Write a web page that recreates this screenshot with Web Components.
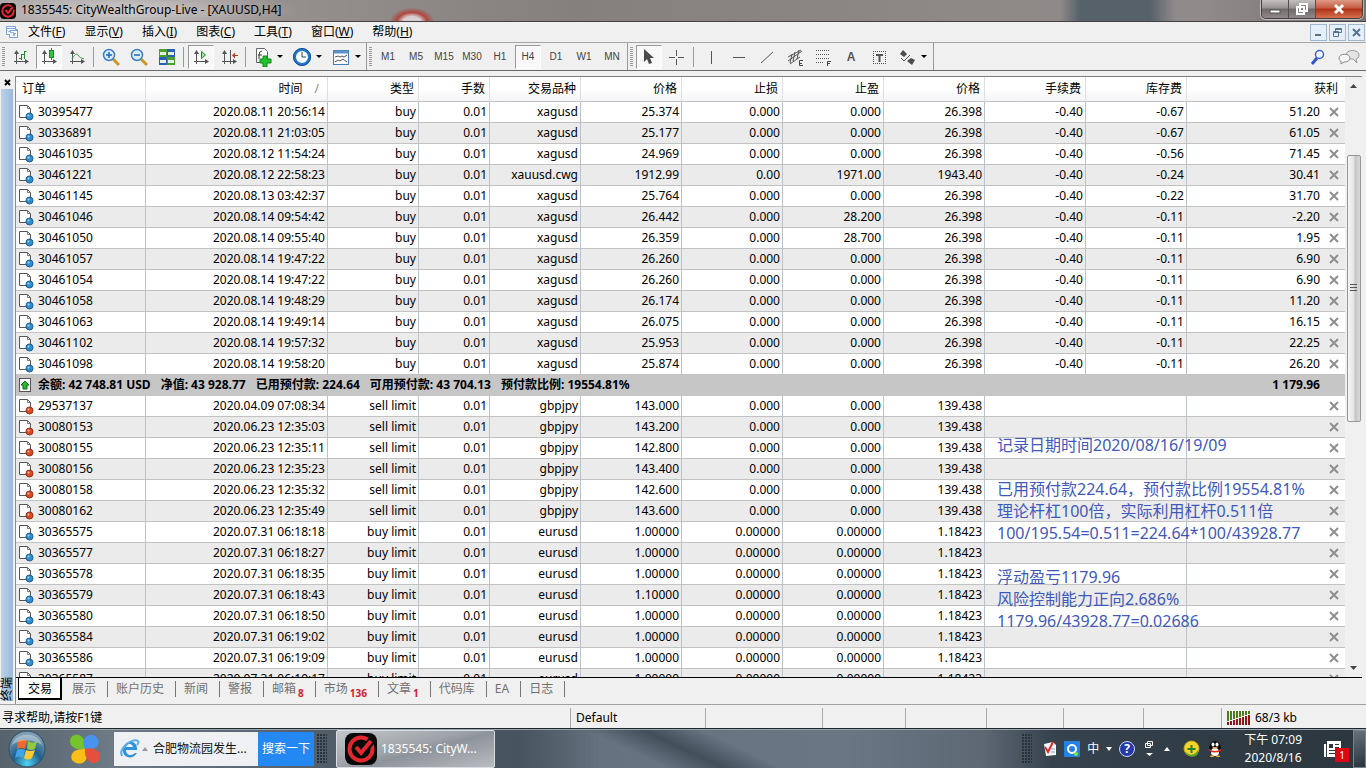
<!DOCTYPE html>
<html lang="zh-CN">
<head>
    <meta charset="UTF-8">
    <title>1835545: CityWealthGroup-Live - [XAUUSD,H4]</title>
    <style>
        :root {
            --ui-bg: #f0f0f0;
            --line: #a0a0a0;
            --row-line: #c2c2c2;
            --row-alt: #ebebeb;
            --muted: #707070;
            --note: #4159bd;
        }
        body {
            margin: 0;
            height: 100vh;
            display: flex;
            flex-direction: column;
            overflow: hidden;
            background: var(--ui-bg);
            color: #000;
            font-family: "Noto Sans", "Noto Sans CJK SC", sans-serif;
            font-size: 12px;
            line-height: 20px;
        }
    </style>
</head>
<body>
    <title-bar>1835545: CityWealthGroup-Live - [XAUUSD,H4]</title-bar>
    <menu-bar></menu-bar>
    <tool-bar></tool-bar>
    <terminal-panel>
        <order-table></order-table>
        <terminal-note slot="note">
            <p>记录日期时间2020/08/16/19/09</p>
            <p>&nbsp;</p>
            <p>已用预付款224.64，预付款比例19554.81%</p>
            <p>理论杆杠100倍，实际利用杠杆0.511倍</p>
            <p>100/195.54=0.511=224.64*100/43928.77</p>
            <p>&nbsp;</p>
            <p>浮动盈亏1179.96</p>
            <p>风险控制能力正向2.686%</p>
            <p>1179.96/43928.77=0.02686</p>
        </terminal-note>
        <tab-strip slot="tabs"></tab-strip>
    </terminal-panel>
    <status-bar>寻求帮助,请按F1键</status-bar>
    <task-bar></task-bar>

    <script>
        // Icons, each with its own view box size: [width, height, markup]
        const AXES = '<path d="M4.500 3v13M2 13.500h14" stroke="#555" fill="none"/><path d="M2 6l2.500-4L7 6zM13 11l4 2.500-4 2.500z" fill="#555"/>';
        const ICONS = {
            logo: [32, 32, '<rect width="32" height="32" rx="8" fill="#080808"/><circle cx="16" cy="16" r="11.500" fill="none" stroke="#e3262f" stroke-width="4"/><path d="M17 19L28 6" fill="none" stroke="#080808" stroke-width="8"/><path d="M11 14l5 6L26 8" fill="none" stroke="#e3262f" stroke-width="4"/>'],
            chartFile: [14, 14, '<path d="M1.500 1.500h9v3h2v8h-8v-3h-3z" fill="#fff" stroke="#7ba3d4"/><path d="M1.500 3.500h9M4.500 5.500h8M3 7l2-1 1 2 2-1 1 4 1-3 1 1" fill="none" stroke="#7ba3d4"/>'],
            bars: [18, 18, AXES + '<path d="M9.500 6v6M12.500 3v8M7 10.500h2.500M9.500 6.500h3M12.500 3.500h2" stroke="#238a35" fill="none"/>'],
            candles: [18, 18, AXES + '<path d="M11.500 0v12" stroke="#188a27"/><rect x="9.500" y="2.500" width="4" height="7" fill="#2fc644" stroke="#188a27"/>'],
            lineChart: [18, 18, AXES + '<path d="M4 11c3-5 5-6 6-4s3 3 6 4" stroke="#3b9c4a" fill="none"/>'],
            zoomIn: [18, 18, '<path d="M11 11l6 6" stroke="#c99a1f" stroke-width="3"/><circle cx="7" cy="7" r="5.500" fill="#d9edfb" stroke="#3f80c4" stroke-width="1.500"/><path d="M4 7h6M7 4v6" stroke="#2268b4" stroke-width="1.500"/>'],
            zoomOut: [18, 18, '<path d="M11 11l6 6" stroke="#c99a1f" stroke-width="3"/><circle cx="7" cy="7" r="5.500" fill="#d9edfb" stroke="#3f80c4" stroke-width="1.500"/><path d="M4 7h6" stroke="#2268b4" stroke-width="1.500"/>'],
            tile: [18, 18, '<path d="M1 1h8v8H1zM9 9h8v8H9z" fill="#49a12b"/><path d="M9 1h8v8H9zM1 9h8v8H1z" fill="#2a60b5"/><path d="M2 4h6v3H2zM10 4h6v3h-6zM2 12h6v3H2zM10 12h6v3h-6z" fill="#e6f0e0"/>'],
            autoScroll: [18, 18, AXES + '<path d="M9.500 3.500v7l4-3.500z" fill="#9be49f" stroke="#1c8f2d"/>'],
            shift: [18, 18, AXES + '<path d="M10.500 2v14" stroke="#555"/><path d="M18 7.500h-4" stroke="#b03a22"/><path d="M12 7.500l3-3v6z" fill="#b03a22"/>'],
            addIndicator: [20, 20, '<path d="M3.500 1.500h8l3 3v11h-11z" fill="#fff" stroke="#666"/><path d="M9 4q-3 0-3 4v4M5 8h4" stroke="#333" fill="none"/><path d="M10 9h4v3h4v4h-4v4h-4v-4H7v-4h3z" fill="#21c22c" stroke="#0f8718"/>'],
            clock: [18, 18, '<circle cx="9" cy="9" r="7.500" fill="#f6fbff" stroke="#2378c9" stroke-width="3"/><circle cx="9" cy="9" r="8.500" fill="none" stroke="#124f96"/><path d="M9 4v5h4" stroke="#444" fill="none"/>'],
            template: [18, 18, '<rect x="1.500" y="2.500" width="15" height="14" fill="#fff" stroke="#467db5"/><path d="M2 4h14" stroke="#5d93ca" stroke-width="3"/><path d="M3 9l3-1 2 1 2-1 2 1 3-2M3 14l3-2 2 1 3-2 4 3" stroke="#555" fill="none"/>'],
            cursor: [18, 18, '<path d="M4 1v13l3-3 2 5 3-1-2-5h4z" fill="#4a4a4a"/>'],
            cross: [18, 18, '<path d="M8.500 2v6M8.500 11v6M1 9.500h6M10 9.500h6" stroke="#555"/>'],
            vline: [18, 18, '<path d="M9.500 3v13" stroke="#555"/>'],
            hline: [18, 18, '<path d="M3 9.500h12" stroke="#555"/>'],
            trend: [18, 18, '<path d="M3 15L15 4" stroke="#555"/>'],
            channel: [18, 18, '<path d="M2 13L16 3M2 9l13-7M4 16L14 9M6 6l-2 9M9 4l-2 9M13 2l-2 9" stroke="#555"/><path d="M17 12.500h-3.500v5H17M13 15.500h3" stroke="#444" fill="none"/>'],
            fibo: [18, 18, '<path d="M2 2.500h14M2 6.500h14M2 10.500h14M2 14.500h8" stroke="#555" stroke-dasharray="1 1"/><path d="M17 13.500h-3.500v5M13 15.500h3" stroke="#444" fill="none"/>'],
            label: [18, 18, '<path d="M3 3.500h13M3 15.500h13M3.500 3v13M15.500 3v13" stroke="#555" stroke-dasharray="1 1" fill="none"/><path d="M6 6h7v2h-2.500v6h-2V8H6z" fill="#555"/>'],
            arrows: [18, 18, '<path d="M2 6l3-4 4 4-3 3zM9 13l4-3 4 2-3 5z" fill="#4d4d4d"/><path d="M3 10l3 3 6-6" stroke="#555" fill="none"/>'],
            search: [16, 16, '<path d="M7 9l-5 6" stroke="#3255c4" stroke-width="3"/><circle cx="9.500" cy="5.500" r="4" fill="#f4f8ff" stroke="#3a62d0" stroke-width="1.500"/>'],
            chat: [22, 16, '<path d="M8 6c0-6 13-6 13 0 0 3-2 4-3 4l1 4-4-4C11 10 8 9 8 6z" fill="#e4e4e4" stroke="#999"/><path d="M1 9c0-5 11-5 11 0 0 3-3 4-6 4l-3 2v-3c-1 0-2-1-2-3z" fill="#f6f6f6" stroke="#888"/>'],
            buyDoc: [16, 17, '<path d="M.5 1.500h8l3 3v9H.5z" fill="#fff" stroke="#555"/><path d="M8.500 1.500v3h3" fill="none" stroke="#777"/><circle cx="10.500" cy="12.500" r="3.500" fill="#2d8fd0" stroke="#1a5e95"/><circle cx="9.500" cy="11.500" r="1" fill="#a6dcf8"/>'],
            sellDoc: [16, 17, '<path d="M.5 1.500h8l3 3v9H.5z" fill="#fff" stroke="#555"/><path d="M8.500 1.500v3h3" fill="none" stroke="#777"/><circle cx="10.500" cy="12.500" r="3.500" fill="#dd4a20" stroke="#97301a"/><circle cx="9.500" cy="11.500" r="1" fill="#ffc0a0"/>'],
            balance: [16, 17, '<rect x=".5" y="1.500" width="11" height="13" fill="#fff" stroke="#555"/><path d="M6 4l4 4H8v4H4V8H2z" fill="#2bb62f" stroke="#146b18"/>'],
            close: [10, 10, '<path d="M1 1l8 8M9 1L1 9" stroke="#8f8f8f" stroke-width="2"/>'],
            traffic: [24, 14, [0, 1, 2, 3, 4, 5, 6, 7].map(i =>
                `<path d="M${i * 3 + 1} 0v${10 - i}" stroke="#4e7d1e" stroke-width="2"/><path d="M${i * 3 + 1} ${11 - i}v${3 + i}" stroke="#8c1713" stroke-width="2"/>`).join('')],
            start: [38, 38, '<defs><radialGradient id="g" cx=".5" cy=".9" r=".8"><stop offset="0" stop-color="#4fd3f2"/><stop offset=".5" stop-color="#1f5f8d"/><stop offset="1" stop-color="#7c9db2"/></radialGradient></defs><circle cx="19" cy="19" r="18" fill="url(#g)" stroke="#324f62"/><path d="M10 11q5-3 9 0l-2 8q-4-2-8 0z" fill="#f0682d"/><path d="M20 11q5 3 9 0l-2 8q-4 2-8 0z" fill="#8fca3e"/><path d="M9 20q4-2 8 0l-2 8q-4-3-8 0z" fill="#3fa5e6"/><path d="M18 20q4 2 9 0l-3 8q-4 3-8 0z" fill="#fdc933"/><path d="M4 15C8 1 30 1 34 15 26 9 12 9 4 15z" fill="#fff" opacity=".35"/>'],
            pinwheel: [32, 32, '<path d="M16 16C10 18 2 15 1 9 1 3 5 1 10 2c5 2 7 8 6 14z" fill="#73c52b"/><path d="M16 16c-2-5-3-9 1-12 4-4 10-2 12 2 2 5-1 9-5 10-3 1-6 1-8 0z" fill="#4a93ec"/><path d="M16 16c2 5 3 10-1 13-4 3-10 1-12-2-2-5 1-9 5-10 3-1 6-1 8-1z" fill="#f9bf16"/><path d="M16 16c6-2 13 0 15 6 1 5-3 9-8 8-5-2-8-8-7-14z" fill="#e4503c"/>'],
            explorer: [20, 20, '<path d="M16 11H6c0 6 6 6 9 3h2C11 23 1 17 3 9 6 0 18 1 17 11z" fill="#2b92e0"/><path d="M6 8h7c-1-4-6-4-7 0z" fill="#fff"/><path d="M2 17C-2 10 13-2 18 2c1 1 0 3-1 4" fill="none" stroke="#58aeea" stroke-width="2"/>'],
            trayDoc: [14, 16, '<path d="M1 3l9-2 3 3v10l-10 1z" fill="#f4f7ff"/><path d="M2 6l3 5L10 1" fill="none" stroke="#df2a20" stroke-width="2"/><path d="M8 8h4M8 11h4" stroke="#8ca8cf"/>'],
            trayQ: [16, 16, '<rect width="16" height="16" rx="1" fill="#2582e5"/><circle cx="8" cy="8" r="4" fill="none" stroke="#fff" stroke-width="2"/><circle cx="12" cy="13" r="2" fill="#7bea3b"/>'],
            restore: [10, 18, '<path d="M3.500 1.500h5v4h-5zM1.500 3.500h5v4h-5z" stroke="#fff" fill="#34404a"/><path d="M2 13h7l-3.500 3z" fill="#fff"/>'],
            shield: [17, 17, '<circle cx="8.500" cy="8.500" r="7.500" fill="#f7d42a" stroke="#b6a621"/><path d="M2 11c4 5 10 5 13-1v4c-3 4-10 4-13-3z" fill="#55a62e"/><path d="M8.500 5v8M4.500 9h8" stroke="#27812a" stroke-width="2"/>'],
            penguin: [16, 18, '<ellipse cx="8" cy="8" rx="6" ry="7" fill="#0a0a0a"/><ellipse cx="8" cy="12" rx="4" ry="4" fill="#fff"/><ellipse cx="6" cy="4.500" rx="1.500" ry="2" fill="#fff"/><ellipse cx="10" cy="4.500" rx="1.500" ry="2" fill="#fff"/><path d="M5 7h6l-3 2z" fill="#f1ab16"/><path d="M2 9q6 4 12 0v2q-6 3-12 0z" fill="#e32b20"/><path d="M3 16q3-2 4 1H3zM13 16q-3-2-4 1h4z" fill="#f2a618"/>'],
            news: [20, 20, '<path d="M4 2h14v16H4zM1 5h2v13H1z" fill="#fff"/><path d="M6 5h4v4H6z" fill="#30383e"/><path d="M12 5.500h4M12 8.500h4M6 11.500h10M6 14.500h10" stroke="#30383e"/>']
        };

        class AppIcon extends HTMLElement {
            constructor() {
                super();
                this.attachShadow({mode: 'open'});
            }
            connectedCallback() {
                const [w, h, body] = ICONS[this.getAttribute('name')];
                const size = this.getAttribute('size');
                this.shadowRoot.innerHTML = `
                    <style>
                        :host { display: inline-flex; flex: none; }
                        svg { display: block; }
                    </style>
                    <svg width="${size || w}" height="${size || h}" viewBox="0 0 ${w} ${h}" aria-hidden="true">${body}</svg>
                `;
            }
        }

        class TitleBar extends HTMLElement {
            constructor() {
                super();
                this.attachShadow({mode: 'open'}).innerHTML = `
                    <style>
                        :host {
                            display: flex;
                            flex: none;
                            height: 21px;
                            border-bottom: 1px solid #474143;
                            justify-content: space-between;
                            background:
                                radial-gradient(ellipse 170px 22px at 130px 11px, rgba(255,255,255,.5), transparent),
                                radial-gradient(ellipse 25px 16px at 412px 22px, #d7cfd2 35%, #b0453c 60%, transparent 90%),
                                linear-gradient(90deg, transparent 1060px, #56616a 1080px, #56616a 1150px, transparent 1175px),
                                linear-gradient(90deg, #aaa4a4, #948e8d 22%, #857f7e 42%, #8e8887 70%, #918a8a 88%, #777172);
                        }
                        .name, .controls { display: flex; }
                        .name { gap: 5px; }
                        app-icon { margin-top: 3px; }
                        .controls {
                            height: 18px;
                            margin-right: 3px;
                            border: 1px solid #453e3f;
                            border-top: 0;
                            border-radius: 0 0 5px 5px;
                            overflow: hidden;
                            box-shadow: 0 0 0 1px rgba(255,255,255,.5);
                        }
                        button {
                            width: 27px;
                            padding: 0;
                            border: 0;
                            border-right: 1px solid #554e4f;
                            display: grid;
                            place-items: center;
                            background: linear-gradient(#c5c0c0, #999292 45%, #706969 50%, #918989);
                        }
                        .close {
                            width: 46px;
                            border: 0;
                            background: linear-gradient(#dd9a87, #c75a40 45%, #b03118 50%, #d5714f);
                        }
                    </style>
                    <div class="name"><app-icon name="logo" size="16"></app-icon><span><slot></slot></span></div>
                    <div class="controls">
                        <button aria-label="最小化"><svg width="14" height="14"><rect x="2" y="8" width="10" height="3" fill="#fff" stroke="#555"/></svg></button>
                        <button aria-label="还原"><svg width="14" height="14"><path d="M5 2h7v7H5zM2 5h7v7H2z" fill="#8c8585" stroke="#fff" stroke-width="2"/></svg></button>
                        <button class="close" aria-label="关闭"><svg width="14" height="14"><path d="M3 3l8 8M11 3l-8 8" stroke="#fff" stroke-width="3"/></svg></button>
                    </div>
                `;
            }
        }

        class MenuBar extends HTMLElement {
            constructor() {
                super();
                const menus = [['文件', 'F'], ['显示', 'V'], ['插入', 'I'], ['图表', 'C'], ['工具', 'T'], ['窗口', 'W'], ['帮助', 'H']];
                this.attachShadow({mode: 'open'}).innerHTML = `
                    <style>
                        :host {
                            display: flex;
                            flex: none;
                            height: 20px;
                            border-bottom: 1px solid #a6a6a6;
                            align-items: center;
                        }
                        app-icon { margin-left: 5px; }
                        nav { display: flex; flex: 1; gap: 1px; }
                        button { font: inherit; border: 0; background: none; }
                        nav button { padding: 0 9px; }
                        .child { display: flex; gap: 2px; margin-right: 1px; }
                        .child button {
                            width: 17px;
                            height: 17px;
                            padding: 0;
                            border: 1px solid #9fb9d2;
                            background: #e4eff9;
                            display: grid;
                            place-items: center;
                        }
                        path { fill: none; stroke: #58738c; stroke-width: 2; }
                        path.thin { stroke-width: 1; }
                    </style>
                    <app-icon name="chartFile"></app-icon>
                    <nav>${menus.map(([text, key]) => `<button>${text}(<u>${key}</u>)</button>`).join('')}</nav>
                    <div class="child">
                        <button aria-label="最小化图表"><svg width="11" height="11"><path d="M2 8h6"/></svg></button>
                        <button aria-label="还原图表"><svg width="11" height="11"><path class="thin" d="M3.500 4V1.500h6v4H7M3.500 2.500h6M1.500 4.500h5v5h-5zM1.500 5.500h5"/></svg></button>
                        <button aria-label="关闭图表"><svg width="11" height="11"><path d="M2 2l7 7M9 2L2 9"/></svg></button>
                    </div>
                `;
            }
        }

        class ToolButton extends HTMLElement {
            constructor() {
                super();
                this.attachShadow({mode: 'open'}).innerHTML = `
                    <style>
                        :host { display: flex; flex: none; }
                        button {
                            width: 26px;
                            height: 24px;
                            margin: 0 1px;
                            padding: 0;
                            border: 1px solid transparent;
                            display: grid;
                            place-items: center;
                            background: none;
                            color: #444;
                            font: 10px "Liberation Sans", sans-serif;
                        }
                        :host([pressed]) button {
                            border-color: #999 #fff #fff #999;
                            background: #f8f8f8;
                        }
                        i { display: none; width: 11px; align-items: center; }
                        :host([menu]) i { display: flex; }
                        i::after {
                            content: "";
                            border: 3px solid transparent;
                            border-top-color: #000;
                            border-bottom: 0;
                        }
                    </style>
                    <button><slot></slot></button><i></i>
                `;
            }
            connectedCallback() {
                this.shadowRoot.querySelector('button').setAttribute('aria-label', this.getAttribute('label') || this.textContent);
            }
        }

        class ToolBar extends HTMLElement {
            constructor() {
                super();
                const tool = (name, attrs = '') => `<tool-button label="${name}" ${attrs}><app-icon name="${name}"></app-icon></tool-button>`;
                const periods = ['M1', 'M5', 'M15', 'M30', 'H1', 'H4', 'D1', 'W1', 'MN'];
                this.attachShadow({mode: 'open'}).innerHTML = `
                    <style>
                        :host {
                            display: flex;
                            flex: none;
                            height: 27px;
                            border-bottom: 1px solid #6c6c6c;
                        }
                        .band {
                            display: flex;
                            align-items: center;
                            border-right: 1px solid #999;
                        }
                        .band + .band { padding-right: 1px; }
                        .band::before {
                            content: "";
                            width: 3px;
                            height: 19px;
                            margin: 0 2px;
                            background: repeating-linear-gradient(#999 0 1px, transparent 1px 2px);
                        }
                        hr {
                            width: 1px;
                            height: 20px;
                            margin: 0 3px 0 2px;
                            border: 0;
                            background: #999;
                        }
                        .right { display: flex; align-items: center; gap: 12px; margin-left: auto; padding-right: 6px; }
                        .right button { border: 0; padding: 0; background: none; display: flex; }
                        b { font-size: 12px; color: #555; }
                    </style>
                    <div class="band">
                        ${tool('bars')}${tool('candles', 'pressed')}${tool('lineChart')}<hr>
                        ${tool('zoomIn')}${tool('zoomOut')}${tool('tile')}<hr>
                        ${tool('autoScroll', 'pressed')}${tool('shift')}<hr>
                        ${tool('addIndicator', 'menu')}${tool('clock', 'menu')}${tool('template', 'menu')}
                    </div>
                    <div class="band">
                        ${periods.map(p => `<tool-button ${p === 'H4' ? 'pressed' : ''}>${p}</tool-button>`).join('')}
                    </div>
                    <div class="band">
                        ${tool('cursor', 'pressed')}${tool('cross')}<hr>
                        ${tool('vline')}${tool('hline')}${tool('trend')}${tool('channel')}${tool('fibo')}
                        <tool-button><b>A</b></tool-button>
                        ${tool('label')}${tool('arrows', 'menu')}
                    </div>
                    <div class="right">
                        <button aria-label="搜索"><app-icon name="search"></app-icon></button>
                        <button aria-label="消息"><app-icon name="chat"></app-icon></button>
                    </div>
                `;
            }
        }

        // Left caption strip, the list with its scroll bar, and the tabs under it
        class TerminalPanel extends HTMLElement {
            constructor() {
                super();
                this.attachShadow({mode: 'open'}).innerHTML = `
                    <style>
                        :host {
                            display: grid;
                            flex: 1;
                            min-height: 0;
                            grid-template: minmax(0, 1fr) 27px / 16px 1fr;
                            padding-top: 5px;
                        }
                        .caption {
                            grid-row: 1 / 3;
                            display: flex;
                            flex-direction: column;
                            padding: 0 2px 3px 1px;
                            border-right: 1px solid #8c8c8c;
                        }
                        .caption button {
                            height: 13px;
                            padding: 0;
                            border: 0;
                            background: none;
                            display: grid;
                            place-items: center;
                        }
                        .caption div {
                            flex: 1;
                            width: 12px;
                            background: linear-gradient(90deg, #9db9d8, #b9d3ee);
                            writing-mode: vertical-rl;
                            text-orientation: sideways;
                            transform: rotate(180deg);
                            line-height: 12px;
                        }
                        .view {
                            position: relative;
                            display: flex;
                            min-width: 0;
                            margin-right: 4px;
                            border-top: 1px solid #808080;
                            overflow: hidden;
                        }
                        ::slotted(order-table) { flex: 1; min-width: 0; }
                        .scroll {
                            width: 17px;
                            flex: none;
                            display: flex;
                            flex-direction: column;
                        }
                        .scroll button {
                            border: 0;
                            padding: 0;
                            height: 18px;
                            background: none;
                            display: grid;
                            place-items: center;
                        }
                        .scroll .before { flex: 60; }
                        .scroll .after { flex: 238; }
                        .thumb {
                            flex: 266;
                            margin: 0 1px 0 2px;
                            border: 1px solid #979797;
                            border-radius: 2px;
                            display: grid;
                            place-items: center;
                            background: linear-gradient(90deg, #f5f5f5, #e6e6e8 45%, #c6c6ca 60%, #d8d8dc);
                        }
                    </style>
                    <div class="caption">
                        <button aria-label="关闭"><svg width="7" height="7"><path d="M1 1l5 5M6 1L1 6" stroke="#000" stroke-width="2"/></svg></button>
                        <div>终端</div>
                    </div>
                    <div class="view">
                        <slot></slot>
                        <div class="scroll">
                            <button aria-label="向上"><svg width="7" height="4"><path d="M0 4L3.500 0 7 4z" fill="#444"/></svg></button>
                            <span class="before"></span>
                            <div class="thumb"><svg width="8" height="8"><path d="M0 .5h7M0 3.500h7M0 6.500h7" stroke="#555"/></svg></div>
                            <span class="after"></span>
                            <button aria-label="向下"><svg width="7" height="4"><path d="M0 0h7L3.500 4z" fill="#444"/></svg></button>
                        </div>
                        <slot name="note"></slot>
                    </div>
                    <slot name="tabs"></slot>
                `;
            }
        }

        // Text laid over the list
        class TerminalNote extends HTMLElement {
            constructor() {
                super();
                this.attachShadow({mode: 'open'}).innerHTML = `
                    <style>
                        :host {
                            position: absolute;
                            top: 357px;
                            right: 39px;
                            width: 326px;
                            color: var(--note);
                            font-size: 16px;
                            line-height: 22px;
                            white-space: nowrap;
                        }
                        ::slotted(p) { margin: 0; }
                    </style>
                    <slot></slot>
                `;
            }
        }

        // [order, time, type, symbol, open price, s/l, t/p, price, swap, profit]
        const OPEN = [
            ['30395477', '2020.08.11 20:56:14', 'buy', 'xagusd', '25.374', '0.000', '0.000', '26.398', '-0.67', '51.20'],
            ['30336891', '2020.08.11 21:03:05', 'buy', 'xagusd', '25.177', '0.000', '0.000', '26.398', '-0.67', '61.05'],
            ['30461035', '2020.08.12 11:54:24', 'buy', 'xagusd', '24.969', '0.000', '0.000', '26.398', '-0.56', '71.45'],
            ['30461221', '2020.08.12 22:58:23', 'buy', 'xauusd.cwg', '1912.99', '0.00', '1971.00', '1943.40', '-0.24', '30.41'],
            ['30461145', '2020.08.13 03:42:37', 'buy', 'xagusd', '25.764', '0.000', '0.000', '26.398', '-0.22', '31.70'],
            ['30461046', '2020.08.14 09:54:42', 'buy', 'xagusd', '26.442', '0.000', '28.200', '26.398', '-0.11', '-2.20'],
            ['30461050', '2020.08.14 09:55:40', 'buy', 'xagusd', '26.359', '0.000', '28.700', '26.398', '-0.11', '1.95'],
            ['30461057', '2020.08.14 19:47:22', 'buy', 'xagusd', '26.260', '0.000', '0.000', '26.398', '-0.11', '6.90'],
            ['30461054', '2020.08.14 19:47:22', 'buy', 'xagusd', '26.260', '0.000', '0.000', '26.398', '-0.11', '6.90'],
            ['30461058', '2020.08.14 19:48:29', 'buy', 'xagusd', '26.174', '0.000', '0.000', '26.398', '-0.11', '11.20'],
            ['30461063', '2020.08.14 19:49:14', 'buy', 'xagusd', '26.075', '0.000', '0.000', '26.398', '-0.11', '16.15'],
            ['30461102', '2020.08.14 19:57:32', 'buy', 'xagusd', '25.953', '0.000', '0.000', '26.398', '-0.11', '22.25'],
            ['30461098', '2020.08.14 19:58:20', 'buy', 'xagusd', '25.874', '0.000', '0.000', '26.398', '-0.11', '26.20']
        ];
        const PENDING = [
            ['29537137', '2020.04.09 07:08:34', 'sell limit', 'gbpjpy', '143.000', '0.000', '0.000', '139.438'],
            ['30080153', '2020.06.23 12:35:03', 'sell limit', 'gbpjpy', '143.200', '0.000', '0.000', '139.438'],
            ['30080155', '2020.06.23 12:35:11', 'sell limit', 'gbpjpy', '142.800', '0.000', '0.000', '139.438'],
            ['30080156', '2020.06.23 12:35:23', 'sell limit', 'gbpjpy', '143.400', '0.000', '0.000', '139.438'],
            ['30080158', '2020.06.23 12:35:32', 'sell limit', 'gbpjpy', '142.600', '0.000', '0.000', '139.438'],
            ['30080162', '2020.06.23 12:35:49', 'sell limit', 'gbpjpy', '143.600', '0.000', '0.000', '139.438'],
            ['30365575', '2020.07.31 06:18:18', 'buy limit', 'eurusd', '1.00000', '0.00000', '0.00000', '1.18423'],
            ['30365577', '2020.07.31 06:18:27', 'buy limit', 'eurusd', '1.00000', '0.00000', '0.00000', '1.18423'],
            ['30365578', '2020.07.31 06:18:35', 'buy limit', 'eurusd', '1.00000', '0.00000', '0.00000', '1.18423'],
            ['30365579', '2020.07.31 06:18:43', 'buy limit', 'eurusd', '1.10000', '0.00000', '0.00000', '1.18423'],
            ['30365580', '2020.07.31 06:18:50', 'buy limit', 'eurusd', '1.00000', '0.00000', '0.00000', '1.18423'],
            ['30365584', '2020.07.31 06:19:02', 'buy limit', 'eurusd', '1.00000', '0.00000', '0.00000', '1.18423'],
            ['30365586', '2020.07.31 06:19:09', 'buy limit', 'eurusd', '1.00000', '0.00000', '0.00000', '1.18423'],
            ['30365587', '2020.07.31 06:19:17', 'buy limit', 'eurusd', '1.00000', '0.00000', '0.00000', '1.18423']
        ];

        class OrderTable extends HTMLElement {
            constructor() {
                super();
                const heads = ['订单', '时间', '类型', '手数', '交易品种', '价格', '止损', '止盈', '价格', '手续费', '库存费', '获利'];
                const widths = [130, 182, 91, 71, 91, 101, 101, 101, 101, 101, 101];
                const close = '<button aria-label="平仓"><app-icon name="close"></app-icon></button>';
                const row = ([id, time, type, symbol, open, sl, tp, price, swap, profit]) => `
                    <tr>
                        <td><app-icon name="${type.startsWith('sell') ? 'sellDoc' : 'buyDoc'}"></app-icon>${id}</td>
                        <td>${time}</td><td>${type}</td><td>0.01</td><td>${symbol}</td>
                        <td>${open}</td><td>${sl}</td><td>${tp}</td><td>${price}</td>
                        ${profit ? `<td>-0.40</td><td>${swap}</td>` : '<td colspan="2"></td>'}
                        <td>${profit || ''}${close}</td>
                    </tr>`;
                this.attachShadow({mode: 'open'}).innerHTML = `
                    <style>
                        :host { display: block; }
                        table {
                            width: 100%;
                            table-layout: fixed;
                            border-spacing: 0;
                            background: #fff;
                            white-space: nowrap;
                        }
                        th, td {
                            box-sizing: border-box;
                            height: 21px;
                            padding: 0 2px 0 0;
                            border-right: 1px solid #b9c3cc;
                            border-bottom: 1px solid var(--row-line);
                            text-align: right;
                        }
                        th {
                            height: 25px;
                            padding-right: 4px;
                            border-right-color: #dedfe1;
                            background: linear-gradient(#fff 50%, #f3f4f6);
                            font-weight: normal;
                        }
                        th:first-child { padding-left: 6px; text-align: left; }
                        th:last-child { padding-right: 7px; }
                        th span { margin: 0 4px 0 12px; color: #888; }
                        td:first-child { padding-left: 3px; text-align: left; }
                        th:last-child, td:last-child { border-right: 0; }
                        td:last-child { padding-right: 6px; }
                        td:first-child app-icon { margin-right: 3px; vertical-align: top; margin-top: 2px; }
                        tbody tr:nth-child(even) { background: var(--row-alt); }
                        button {
                            padding: 0;
                            margin-left: 9px;
                            border: 0;
                            background: none;
                            vertical-align: middle;
                            line-height: 10px;
                        }
                        tbody tr.balance {
                            background: #c6c6c6;
                            font-weight: bold;
                        }
                        .balance td { border-color: #c6c6c6; }
                        .balance span { margin-right: 10px; }
                        .balance td:last-child { padding-right: 25px; }
                    </style>
                    <table>
                        <colgroup>${widths.map(w => `<col style="width: ${w}px">`).join('')}<col></colgroup>
                        <thead><tr>${heads.map((h, i) => `<th>${h}${i === 1 ? '<span>/</span>' : ''}</th>`).join('')}</tr></thead>
                        <tbody>
                            ${OPEN.map(row).join('')}
                            <tr class="balance">
                                <td colspan="11"><app-icon name="balance"></app-icon><span>余额: 42 748.81 USD</span><span>净值: 43 928.77</span><span>已用预付款: 224.64</span><span>可用预付款: 43 704.13</span><span>预付款比例: 19554.81%</span></td>
                                <td>1 179.96</td>
                            </tr>
                            ${PENDING.map(row).join('')}
                        </tbody>
                    </table>
                `;
            }
        }

        class TabStrip extends HTMLElement {
            constructor() {
                super();
                const tabs = [['交易'], ['展示'], ['账户历史'], ['新闻'], ['警报'], ['邮箱', 8], ['市场', 136], ['文章', 1], ['代码库'], ['EA'], ['日志']];
                this.attachShadow({mode: 'open'}).innerHTML = `
                    <style>
                        :host {
                            display: flex;
                            margin-right: 4px;
                            border-top: 1px solid #000;
                            align-items: flex-start;
                        }
                        button {
                            height: 16px;
                            margin-top: 3px;
                            padding: 0 11px 0 8px;
                            border: 0;
                            border-right: 1px solid #777;
                            background: none;
                            color: var(--muted);
                            font: inherit;
                            line-height: 16px;
                            display: flex;
                        }
                        .active {
                            height: 22px;
                            margin: 0 2px;
                            padding: 2px 8px 0 9px;
                            border: 1px solid #000;
                            border-width: 0 2px 2px 1px;
                            background: #fff;
                            color: #000;
                            line-height: 18px;
                        }
                        small {
                            margin: 5px 0 0 2px;
                            color: #d3222c;
                            font: bold 10px/14px "Noto Sans", sans-serif;
                        }
                    </style>
                    ${tabs.map(([name, count], i) => `<button class="${i ? '' : 'active'}">${name}${count ? `<small>${count}</small>` : ''}</button>`).join('')}
                `;
            }
        }

        class StatusBar extends HTMLElement {
            constructor() {
                super();
                this.attachShadow({mode: 'open'}).innerHTML = `
                    <style>
                        :host {
                            display: grid;
                            flex: none;
                            grid-template-columns: 1fr 135px 117px 83px 81px 77px 80px 78px 145px;
                            height: 23px;
                            border-top: 1px solid var(--line);
                        }
                        div { margin: 3px 0 2px; border-left: 1px solid #aaa; padding-left: 5px; line-height: 20px; }
                        div:first-of-type { border: 0; padding-left: 2px; }
                        .kb { display: flex; gap: 4px; }
                        app-icon { margin-top: 3px; }
                    </style>
                    <div><slot></slot></div>
                    <div>Default</div>
                    <div></div><div></div><div></div><div></div><div></div><div></div>
                    <div class="kb"><app-icon name="traffic"></app-icon>68/3 kb</div>
                `;
            }
        }

        class TaskBar extends HTMLElement {
            constructor() {
                super();
                this.attachShadow({mode: 'open'}).innerHTML = `
                    <style>
                        :host {
                            display: flex;
                            flex: none;
                            box-sizing: border-box;
                            height: 40px;
                            border-top: 1px solid #20282f;
                            box-shadow: inset 0 1px #9ba5ae;
                            align-items: center;
                            color: #fff;
                            background:
                                linear-gradient(25deg, transparent 46%, rgba(30,42,52,.5) 50%, transparent 54%),
                                linear-gradient(90deg, #56636d, #6d7984 8%, #515d69 24%, #46545f 38%, #66727f 44%, #6a7684 62%, #5d6874 72%, #36424c 77%, #2b363e 100%);
                        }
                        button { border: 0; padding: 0; background: none; color: inherit; font: inherit; display: flex; align-items: center; }
                        .start { margin: 0 23px 0 8px; }
                        form { display: flex; height: 34px; margin-left: 13px; background: #eef0f3; align-items: center; }
                        form app-icon { margin-left: 6px; }
                        input {
                            width: 110px;
                            padding: 0 0 0 5px;
                            border: 0;
                            background: none;
                            box-sizing: border-box;
                            font: inherit;
                            color: #111;
                        }
                        .up::before {
                            content: "";
                            display: block;
                            border: 3px solid transparent;
                            border-bottom: 4px solid currentColor;
                            border-top: 0;
                        }
                        form .up { margin-left: 2px; color: #999; }
                        form button { width: 56px; height: 34px; justify-content: center; background: #2488f3; }
                        .grip {
                            width: 10px;
                            height: 30px;
                            margin: 0 9px 0 3px;
                            background: radial-gradient(circle at 1px 1px, #29333b 1px, transparent 1px) 0 0 / 3px 3px;
                        }
                        .task {
                            box-sizing: border-box;
                            width: 159px;
                            height: 38px;
                            padding: 0 8px;
                            gap: 4px;
                            border: 1px solid #d8dde2;
                            border-radius: 2px;
                            background: linear-gradient(165deg, #c3c7ca, #9da2a8 45%, #8d939a 55%, #b9bdc2);
                        }
                        .tray { display: flex; align-items: center; margin-left: auto; gap: 7px; }
                        .tray .grip { margin: 0 4px 0 0; }
                        .tray .up { margin: 0 6px 0 3px; }
                        .help {
                            width: 16px;
                            height: 16px;
                            margin-right: 2px;
                            justify-content: center;
                            border: 1px solid #c7d2ff;
                            border-radius: 50%;
                            background: #2639a8;
                            font-weight: bold;
                        }
                        .down::before {
                            content: "";
                            border: 3px solid transparent;
                            border-top: 4px solid #fff;
                            border-bottom: 0;
                        }
                        time { padding: 0 14px; text-align: center; line-height: 18px; }
                        .news { position: relative; margin-right: 3px; }
                        .news span {
                            position: absolute;
                            left: 12px;
                            top: 9px;
                            width: 14px;
                            height: 14px;
                            background: #dd0612;
                            font: 10px/14px "Noto Sans", sans-serif;
                        }
                        .desktop { width: 13px; height: 38px; border: 1px solid #77828b; background: linear-gradient(160deg, #66727b, #29343c); }
                    </style>
                    <button class="start" aria-label="开始"><app-icon name="start"></app-icon></button>
                    <button aria-label="浏览器"><app-icon name="pinwheel"></app-icon></button>
                    <form>
                        <app-icon name="explorer"></app-icon>
                        <span class="up"></span>
                        <input type="text" aria-label="搜索" value="合肥物流园发生...">
                        <button type="button">搜索一下</button>
                    </form>
                    <div class="grip"></div>
                    <button class="task"><app-icon name="logo"></app-icon>1835545: CityW...</button>
                    <div class="tray">
                        <div class="grip"></div>
                        <app-icon name="trayDoc"></app-icon>
                        <app-icon name="trayQ"></app-icon>
                        <span>中</span>
                        <button class="down" aria-label="输入法"></button>
                        <button class="help" aria-label="帮助">?</button>
                        <app-icon name="restore"></app-icon>
                        <button class="up" aria-label="显示隐藏的图标"></button>
                        <app-icon name="shield"></app-icon>
                        <app-icon name="penguin"></app-icon>
                        <time>下午 07:09<br>2020/8/16</time>
                        <button class="news" aria-label="通知"><app-icon name="news"></app-icon><span>1</span></button>
                        <button class="desktop" aria-label="显示桌面"></button>
                    </div>
                `;
            }
        }

        customElements.define('app-icon', AppIcon);
        customElements.define('title-bar', TitleBar);
        customElements.define('menu-bar', MenuBar);
        customElements.define('tool-button', ToolButton);
        customElements.define('tool-bar', ToolBar);
        customElements.define('terminal-panel', TerminalPanel);
        customElements.define('terminal-note', TerminalNote);
        customElements.define('order-table', OrderTable);
        customElements.define('tab-strip', TabStrip);
        customElements.define('status-bar', StatusBar);
        customElements.define('task-bar', TaskBar);
    </script>
</body>
</html>
